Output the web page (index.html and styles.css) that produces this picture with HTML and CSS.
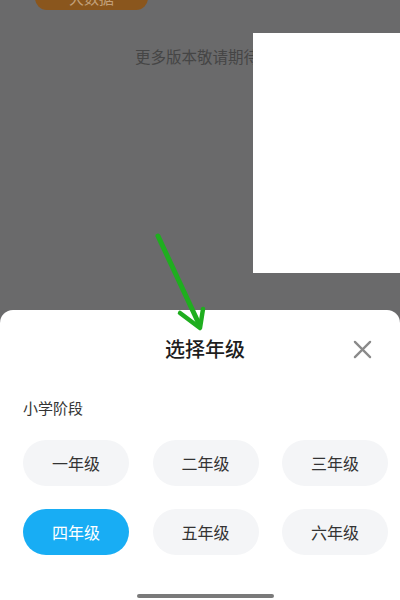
FILE: index.html
```html
<!DOCTYPE html>
<html lang="zh">
<head>
<meta charset="utf-8">
<link rel="stylesheet" href="styles.css">
</head>
<body>
<div class="page">
  <div class="backdrop">
    <div class="tag">大数据</div>
    <p class="more">更多版本敬请期待</p>
    <div class="panel"></div>
  </div>
  <div class="sheet">
    <div class="head">
      <h2 class="title">选择年级</h2>
      <svg class="close" viewBox="0 0 20 20" width="20" height="20"><path d="M2 2 L18 18 M18 2 L2 18" stroke="#8a8a8a" stroke-width="2.4" stroke-linecap="round" fill="none"/></svg>
    </div>
    <div class="label">小学阶段</div>
    <div class="grid">
      <div class="chip">一年级</div>
      <div class="chip">二年级</div>
      <div class="chip">三年级</div>
      <div class="chip active">四年级</div>
      <div class="chip">五年级</div>
      <div class="chip">六年级</div>
    </div>
    <div class="home"></div>
  </div>
  <svg class="arrow" viewBox="0 0 400 600" width="400" height="600">
    <path d="M158 236 L199 324" stroke="#1fae1f" stroke-width="5" stroke-linecap="round" fill="none"/>
    <path d="M180 313 L200 328 L203 309" stroke="#1fae1f" stroke-width="4.5" stroke-linecap="round" stroke-linejoin="round" fill="none"/>
  </svg>
</div>
</body>
</html>
```
FILE: styles.css
```css
* { box-sizing: border-box; }
html, body { margin: 0; padding: 0; }
body {
  width: 400px;
  height: 600px;
  overflow: hidden;
  background: #6a6a6b;
  font-family: "Noto Sans CJK SC", "Noto Sans", sans-serif;
}
.page {
  position: relative;
  width: 400px;
  height: 600px;
  display: flex;
  flex-direction: column;
}
.backdrop {
  height: 310px;
  display: flex;
  flex-direction: column;
}
.tag {
  margin: -14px 0 0 35px;
  width: 113px;
  height: 24px;
  border-radius: 12px;
  background: #8a561d;
  color: #c2a07a;
  font-size: 15px;
  line-height: 24px;
  text-align: center;
}
.more {
  margin: 34px 0 0 135px;
  font-size: 15.5px;
  line-height: 24px;
  color: #454545;
  white-space: nowrap;
}
.panel {
  position: absolute;
  left: 253px;
  top: 33px;
  width: 147px;
  height: 240px;
  background: #ffffff;
}
.sheet {
  flex: 1;
  background: #ffffff;
  border-radius: 13px 13px 0 0;
  display: flex;
  flex-direction: column;
}
.head {
  position: relative;
  padding-top: 27px;
  height: 51px;
}
.title {
  margin: 0;
  text-align: center;
  font-size: 20px;
  line-height: 24px;
  font-weight: 500;
  color: #1e1e1e;
  padding-left: 10px;
}
.close {
  position: absolute;
  right: 28px;
  top: 30px;
  width: 19px;
  height: 19px;
}
.label {
  margin: 36px 0 0 23px;
  font-size: 15px;
  line-height: 22px;
  color: #333333;
}
.grid {
  margin: 21px 0 0 23px;
  display: grid;
  grid-template-columns: repeat(3, 106px);
  column-gap: 23.5px;
  row-gap: 23px;
}
.chip {
  height: 46px;
  border-radius: 23px;
  background: #f4f5f7;
  color: #333333;
  font-size: 16px;
  line-height: 46px;
  text-align: center;
}
.chip.active {
  background: #18adf4;
  color: #ffffff;
}
.home {
  margin: 39px 0 0 137px;
  width: 137px;
  height: 4px;
  border-radius: 2px;
  background: #7a7a7a;
}
.arrow {
  position: absolute;
  left: 0;
  top: 0;
  pointer-events: none;
}
```
